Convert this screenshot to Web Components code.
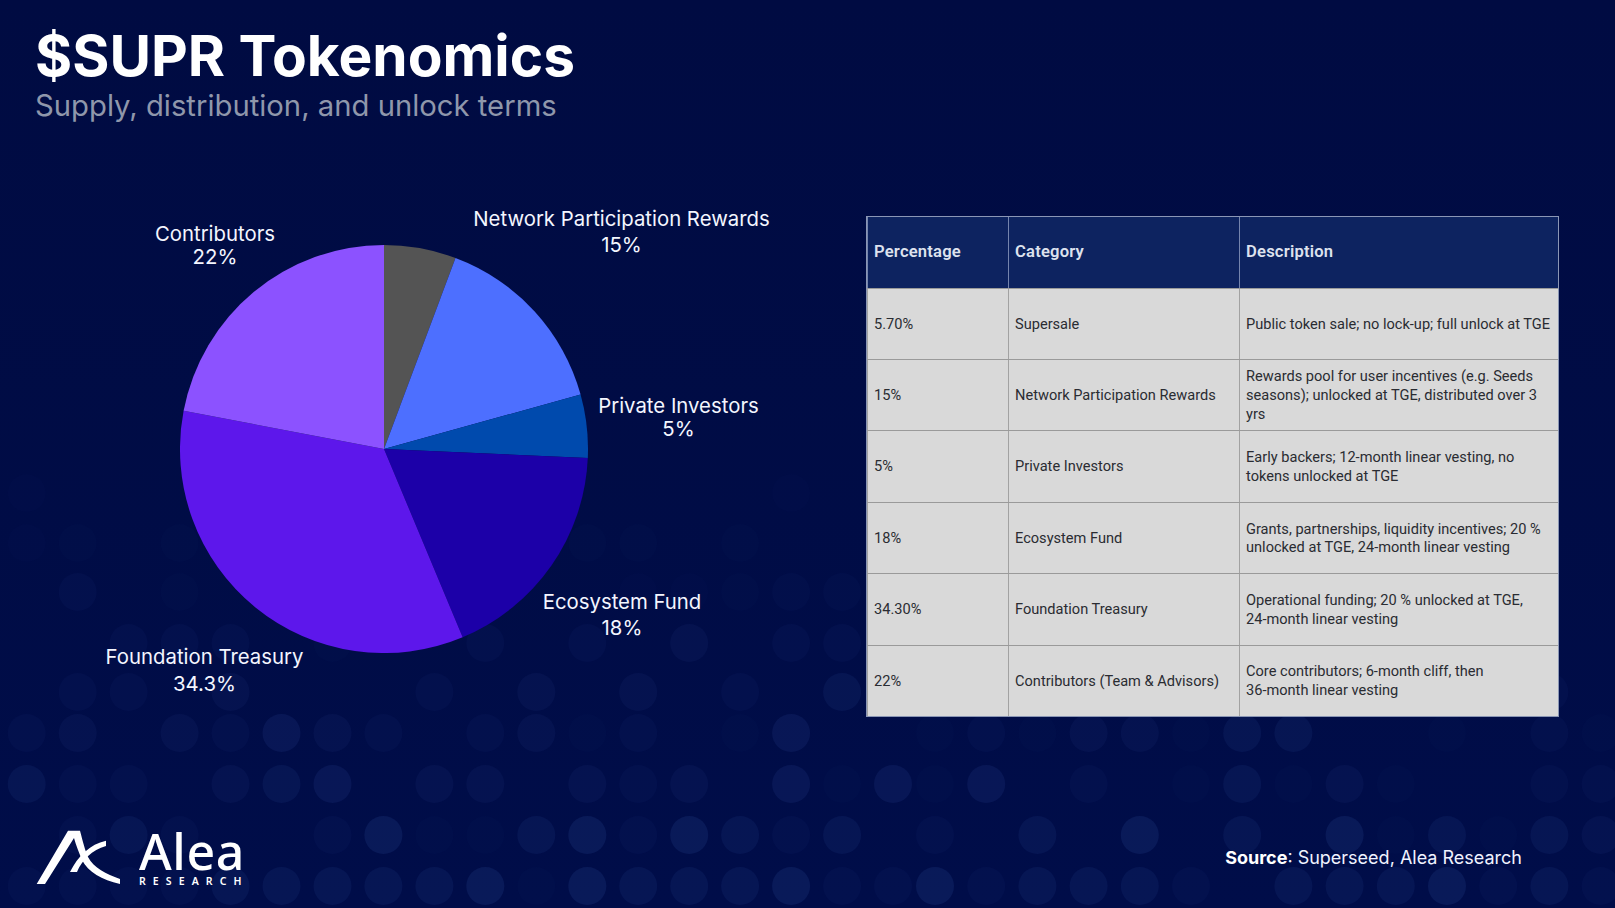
<!DOCTYPE html>
<html>
<head>
<meta charset="utf-8">
<title>$SUPR Tokenomics</title>
<style>
  html, body { margin: 0; padding: 0; background: #000b43; }
</style>
</head>
<body>
<slide-page>
  <slide-header title-text="$SUPR Tokenomics" sub-text="Supply, distribution, and unlock terms"></slide-header>
  <slide-main>
    <pie-chart>
      <pie-label x="215" y="233" gap="23" name="Contributors" value="22%"></pie-label>
      <pie-label x="621.5" y="219" gap="26" name="Network Participation Rewards" value="15%"></pie-label>
      <pie-label x="678.5" y="405" gap="23" name="Private Investors" value="5%"></pie-label>
      <pie-label x="622" y="602" gap="26" name="Ecosystem Fund" value="18%"></pie-label>
      <pie-label x="204.5" y="656" gap="27" name="Foundation Treasury" value="34.3%"></pie-label>
    </pie-chart>
    <token-table>
      <token-row head pct="Percentage" cat="Category">Description</token-row>
      <token-row pct="5.70%" cat="Supersale">Public token sale; no lock-up; full unlock at TGE</token-row>
      <token-row pct="15%" cat="Network Participation Rewards">Rewards pool for user incentives (e.g. Seeds<br>seasons); unlocked at TGE, distributed over 3<br>yrs</token-row>
      <token-row pct="5%" cat="Private Investors">Early backers; 12-month linear vesting, no<br>tokens unlocked at TGE</token-row>
      <token-row pct="18%" cat="Ecosystem Fund">Grants, partnerships, liquidity incentives; 20 %<br>unlocked at TGE, 24-month linear vesting</token-row>
      <token-row pct="34.30%" cat="Foundation Treasury">Operational funding; 20 % unlocked at TGE,<br>24-month linear vesting</token-row>
      <token-row pct="22%" cat="Contributors (Team &amp; Advisors)">Core contributors; 6-month cliff, then<br>36-month linear vesting</token-row>
    </token-table>
  </slide-main>
  <slide-footer></slide-footer>
</slide-page>

<script>
// dot strengths per row of the background, read off the reference
const DOT_ROWS = [
  [493, [.3,0,0,0,0,0,0,0,0,0,0,0,0,0,0,.3]],
  [543, [.3,.5,0,.5,0,0,0,0,0,0,0,.5,.5,0,.5,0,0]],
  [592, [0,1,0,.5,0,0,0,0,0,0,0,0,.3,.3,.5,.8,.8]],
  [643, [0,0,1,1,1,0,.5,0,0,1,0,1,0,1.5,0,1,1]],
  [692, [0,1,1,0,1.5,0,0,0,1,0,1.5,0,1.5,0,1,0,2,0,0,0,0,0,0,0,0,0,0,0,0,0,1]],
  [733, [1,1.5,0,1.5,1,2.5,1.5,1,0,1,1.5,.5,1,0,.5,2.5,0,0,.5,1,.5,1.5,1.5,.5,2,2,0,0,.5,0,1,.5]],
  [784, [2,1,1,0,1.5,2,2.5,0,1.5,1.5,0,1.5,1,1.5,0,2.5,.5,2.5,.5,2.5,0,1,0,.5,2,.5,1.5,.5,0,0,1,1]],
  [835, [0,1,2,1,0,0,1,3,.5,.5,2,3,1,3,2,1,2,0,1,0,2,0,3,0,2,0,3,.5,2,.5,2,1.5]],
  [886, [1,1,1,1,2,2,2,2,2,3,.5,3,2,2,2,3,1,1,3,1,2,2,2,1,0,2,2,2,3,1,2,1]]
];

customElements.define('dot-field', class extends HTMLElement {
  constructor() {
    super();
    const root = this.attachShadow({mode: 'open'});
    let dots = '';
    DOT_ROWS.forEach(([y, levels]) => {
      levels.forEach((lv, k) => {
        if (!lv) return;
        // the pattern tile has a seam after column 17
        const x = k < 18 ? 26.7 + 50.96 * k : 935 + 51.2 * (k - 18);
        dots += `<circle cx="${x.toFixed(1)}" cy="${y}" r="19" fill-opacity="${(lv * 0.072).toFixed(3)}"/>`;
      });
    });
    root.innerHTML = `
      <style>
        :host { position: absolute; inset: 0; display: block; }
        svg { display: block; }
      </style>
      <svg width="1615" height="908" viewBox="0 0 1615 908" fill="#2a4a96">${dots}</svg>
    `;
  }
});

customElements.define('slide-page', class extends HTMLElement {
  constructor() {
    super();
    const root = this.attachShadow({mode: 'open'});
    root.innerHTML = `
      <style>
        :host {
          display: block;
          position: relative;
          width: 1615px;
          height: 908px;
          overflow: hidden;
          background: linear-gradient(#000b42, #000d49);
          color: #fff;
          font-family: Inter, "Liberation Sans", sans-serif;
        }
        .content {
          position: relative;
          display: flex;
          flex-direction: column;
          height: 100%;
        }
      </style>
      <dot-field></dot-field>
      <div class="content"><slot></slot></div>
    `;
  }
});

customElements.define('slide-header', class extends HTMLElement {
  constructor() {
    super();
    const root = this.attachShadow({mode: 'open'});
    root.innerHTML = `
      <style>
        :host { display: block; height: 190px; box-sizing: border-box; padding: 22px 0 0 35px; }
        h1 { margin: 0; font-size: 56.8px; line-height: 68px; font-weight: 700; color: #fff; }
        p { margin: -2px 0 0; font-size: 29.25px; line-height: 36px; font-weight: 400; color: #8f97ab; }
      </style>
      <h1></h1>
      <p></p>
    `;
    root.querySelector('h1').textContent = this.getAttribute('title-text');
    root.querySelector('p').textContent = this.getAttribute('sub-text');
  }
});

customElements.define('slide-main', class extends HTMLElement {
  constructor() {
    super();
    const root = this.attachShadow({mode: 'open'});
    root.innerHTML = `
      <style>
        :host { display: flex; flex: 1; align-items: flex-start; }
      </style>
      <slot></slot>
    `;
  }
});

customElements.define('pie-chart', class extends HTMLElement {
  constructor() {
    super();
    const root = this.attachShadow({mode: 'open'});
    const slices = [
      [5.7, '#545454'], [15, '#4d6fff'], [5, '#004aad'],
      [18, '#1c00a8'], [34.3, '#5d17eb'], [22, '#8c52ff']
    ];
    const cx = 204, cy = 204, r = 204;
    let start = 0, paths = '';
    slices.forEach(([pct, color]) => {
      const a0 = start * Math.PI / 50, a1 = (start + pct) * Math.PI / 50;
      const large = pct > 50 ? 1 : 0;
      paths += `<path fill="${color}" d="M${cx} ${cy}L${(cx + r * Math.sin(a0)).toFixed(2)} ${(cy - r * Math.cos(a0)).toFixed(2)}A${r} ${r} 0 ${large} 1 ${(cx + r * Math.sin(a1)).toFixed(2)} ${(cy - r * Math.cos(a1)).toFixed(2)}Z"/>`;
      start += pct;
    });
    root.innerHTML = `
      <style>
        :host {
          display: block;
          position: relative;
          box-sizing: border-box;
          width: 866px;
          height: 480px;
          padding: 55px 0 0 180px;
        }
        svg { display: block; }
      </style>
      <svg width="408" height="408" viewBox="0 0 408 408">${paths}</svg>
      <slot></slot>
    `;
  }
});

customElements.define('pie-label', class extends HTMLElement {
  constructor() {
    super();
    const root = this.attachShadow({mode: 'open'});
    const gap = +this.getAttribute('gap');
    const x = +this.getAttribute('x');
    const y = +this.getAttribute('y');
    // x, y are page coordinates of the first line's centre; the chart starts at y 190
    root.innerHTML = `
      <style>
        :host {
          position: absolute;
          left: ${x}px;
          top: ${y - 190 - gap / 2}px;
          transform: translateX(-50%);
          display: block;
          text-align: center;
          white-space: nowrap;
          font-size: 20.35px;
          line-height: ${gap}px;
          color: #f4f6ff;
        }
      </style>
      <div class="name"></div>
      <div class="value"></div>
    `;
    root.querySelector('.name').textContent = this.getAttribute('name');
    root.querySelector('.value').textContent = this.getAttribute('value');
  }
});

customElements.define('token-table', class extends HTMLElement {
  constructor() {
    super();
    const root = this.attachShadow({mode: 'open'});
    root.innerHTML = `
      <style>
        :host {
          display: block;
          box-sizing: border-box;
          width: 693px;
          margin-top: 26px;
          border: 1px solid #8a96b5;
          background: #d9d9d9;
          font-family: Roboto, "Liberation Sans", sans-serif;
        }
      </style>
      <slot></slot>
    `;
  }
});

customElements.define('token-row', class extends HTMLElement {
  constructor() {
    super();
    const root = this.attachShadow({mode: 'open'});
    root.innerHTML = `
      <style>
        :host {
          display: grid;
          grid-template-columns: 141px 231px 1fr;
          height: 71.45px;
          box-sizing: border-box;
          border-top: 1px solid #9a9a9a;
          color: #2a2c32;
          font-size: 14.6px;
          line-height: 18.6px;
        }
        :host(:first-child) { border-top: none; height: 70.6px; }
        :host([head]) {
          background: #0d2360;
          color: #dde2ee;
          font-size: 16.6px;
          font-weight: 600;
          letter-spacing: .2px;
        }
        .cell {
          display: flex;
          align-items: center;
          box-sizing: border-box;
          padding: 0 6px;
          white-space: nowrap;
          border-left: 1px solid #a2a2a2;
        }
        .cell:first-child { border-left: none; }
        :host([head]) .cell { border-left-color: #7484ad; }
        .inner { display: block; }
      </style>
      <div class="cell pct"></div>
      <div class="cell cat"></div>
      <div class="cell"><span class="inner"><slot></slot></span></div>
    `;
    root.querySelector('.pct').textContent = this.getAttribute('pct');
    root.querySelector('.cat').textContent = this.getAttribute('cat');
  }
});

customElements.define('alea-logo', class extends HTMLElement {
  constructor() {
    super();
    const root = this.attachShadow({mode: 'open'});
    root.innerHTML = `
      <style>
        :host { display: flex; align-items: flex-start; gap: 18px; color: #fff; }
        svg { display: block; }
        .word { font-family: "Noto Sans", sans-serif; }
        .name { font-size: 50px; line-height: 50px; font-weight: 500; letter-spacing: .6px; margin-top: -4px; }
        .sub { font-size: 10.5px; line-height: 12px; font-weight: 600; letter-spacing: 7.1px; margin-top: -1px; white-space: nowrap; }
      </style>
      <svg width="85" height="55" viewBox="0 0 85 55" fill="#fff">
        <path d="M.7 54 32 .7H44C47 12 49 20 52 27 58 38 70 44 84 49V54C66 50 52 42 46 30 43 23 40 15 38 8L9 54Z"/>
        <path d="M70 10.7C54 14 42 26 34 42H41C46 30 56 20 70 16Z"/>
      </svg>
      <div class="word">
        <div class="name">Alea</div>
        <div class="sub">RESEARCH</div>
      </div>
    `;
  }
});

customElements.define('slide-footer', class extends HTMLElement {
  constructor() {
    super();
    const root = this.attachShadow({mode: 'open'});
    root.innerHTML = `
      <style>
        :host {
          display: flex;
          justify-content: space-between;
          align-items: flex-start;
          height: 78px;
          padding: 0 93px 0 36px;
        }
        .source { margin-top: 15.5px; font-size: 18px; line-height: 24px; color: #f0f3ff; }
        b { font-weight: 700; color: #fff; }
      </style>
      <alea-logo></alea-logo>
      <div class="source"><b>Source</b>: Superseed, Alea Research</div>
    `;
  }
});
</script>
</body>
</html>
